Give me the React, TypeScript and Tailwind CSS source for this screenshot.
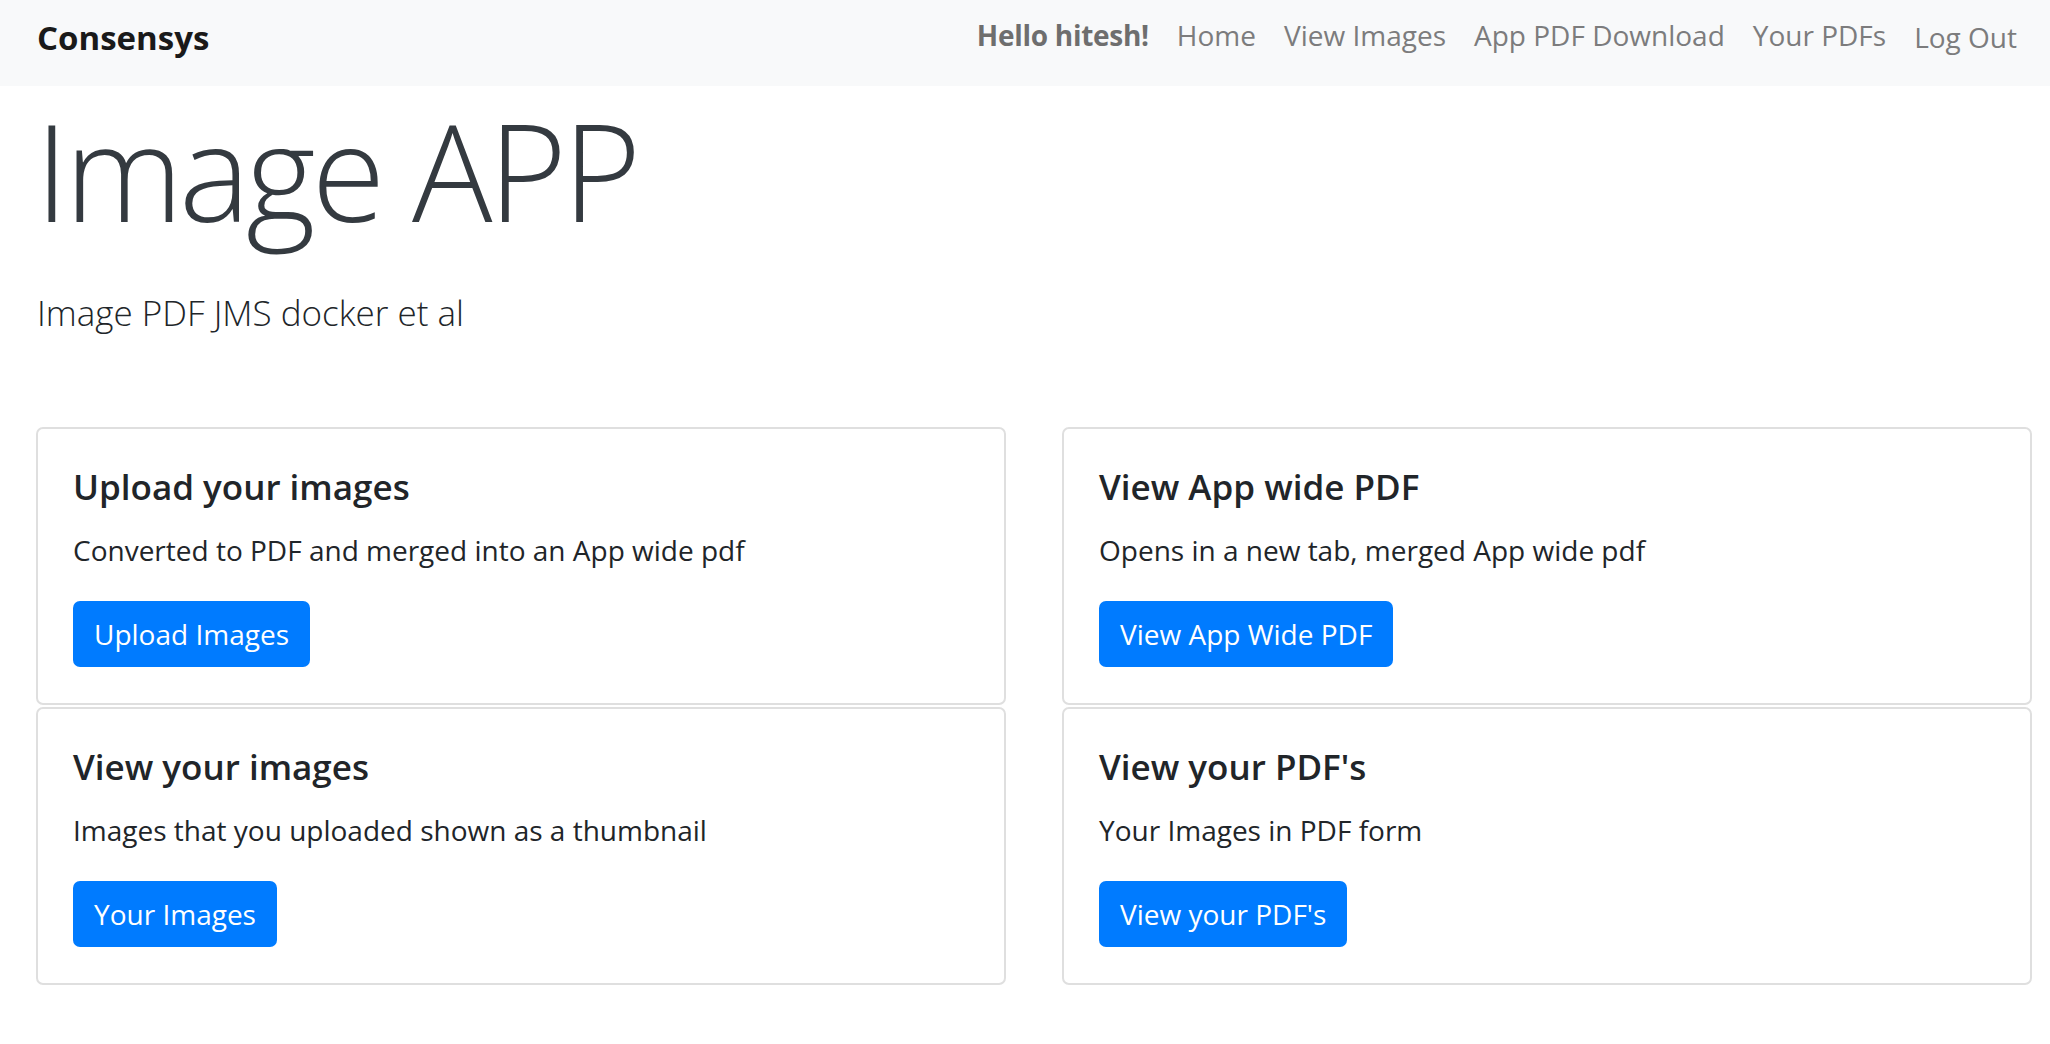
const cards = [
  {
    title: "Upload your images",
    text: "Converted to PDF and merged into an App wide pdf",
    button: "Upload Images",
  },
  {
    title: "View App wide PDF",
    text: "Opens in a new tab, merged App wide pdf",
    button: "View App Wide PDF",
  },
  {
    title: "View your images",
    text: "Images that you uploaded shown as a thumbnail",
    button: "Your Images",
  },
  {
    title: "View your PDF's",
    text: "Your Images in PDF form",
    button: "View your PDF's",
  },
];

const links = ["Home", "View Images", "App PDF Download", "Your PDFs"];

const App = () => {
  return (
    <div className="min-h-screen bg-white font-['Open_Sans',sans-serif] text-[#212529]">
      {/* Navbar */}
      <nav className="h-[86px] bg-[#f8f9fa] flex items-start justify-between pl-[37px] pr-[33px]">
        <a className="mt-[12px] text-[33px] leading-[52px] font-bold text-[#1a1a1a]">
          Consensys
        </a>
        <div className="flex items-start gap-[28px] mt-[14px] text-[28px] leading-[42px] text-[#7c7c7d]">
          <span className="font-bold text-[#6e6e6e] tracking-[-0.01em]">Hello hitesh!</span>
          {links.map((l) => (
            <a key={l}>{l}</a>
          ))}
          <a className="mt-[2px]">Log Out</a>
        </div>
      </nav>

      {/* Jumbotron */}
      <div className="pl-[37px] pt-[4px]">
        <h1 className="text-[134px] leading-[1.2] font-light tracking-[-0.03em] text-[#343a40] -ml-[2px]">
          Image APP
        </h1>
        <p className="mt-[36px] text-[35px] leading-[1.5] font-light text-[#212529]">
          Image PDF JMS docker et al
        </p>
      </div>

      {/* Cards */}
      <div className="grid grid-cols-2 gap-x-[56px] gap-y-[2px] pl-[36px] pr-[18px] mt-[88px]">
        {cards.map((c) => (
          <div
            key={c.title}
            className="border-2 border-[#dfdfdf] rounded-[7px] pt-[37px] pb-[36px] px-[35px]"
          >
            <h5 className="text-[35px] leading-[1.2] font-semibold text-[#212529] mb-[21px]">
              {c.title}
            </h5>
            <p className="text-[28px] leading-[1.5] mb-[30px]">{c.text}</p>
            <button className="bg-[#007bff] text-white text-[28px] leading-[1.5] px-[21px] py-[12px] rounded-[7px]">
              {c.button}
            </button>
          </div>
        ))}
      </div>
    </div>
  );
};

export default App;
